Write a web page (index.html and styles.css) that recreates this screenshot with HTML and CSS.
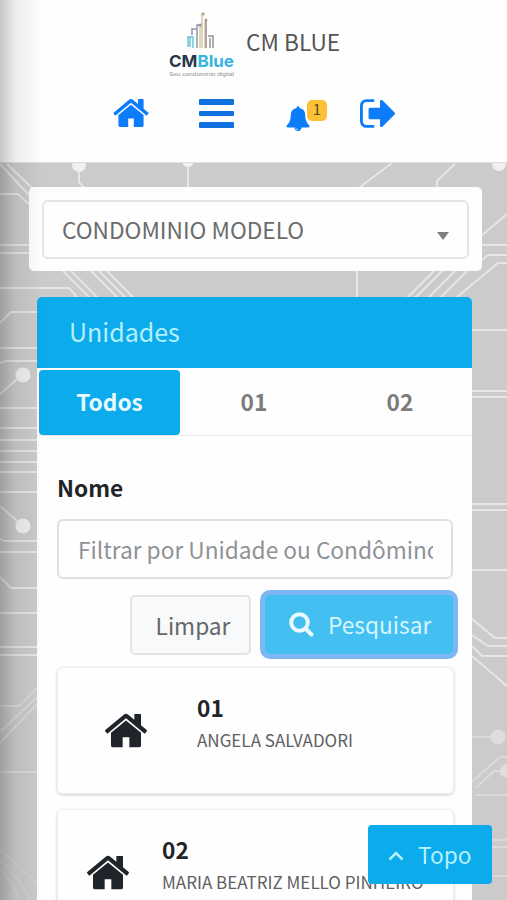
FILE: index.html
```html
<!DOCTYPE html>
<html lang="pt-br">
<head>
    <meta charset="UTF-8">
    <meta name="viewport" content="width=device-width, initial-scale=1.0">
    <title>CM Blue - Unidades</title>
    <link rel="stylesheet" href="styles.css">
</head>
<body>
    <!-- icons -->
    <svg class="sprite" width="0" height="0">
        <symbol id="home" viewBox="26 30 1612 1282"><path d="M1408 768v480q0 26-19 45t-45 19H960V928H704v384H320q-26 0-45-19t-19-45V768q0-1 .5-3t.5-3l575-474 575 474q1 2 1 6zm223-69l-62 74q-8 9-21 11h-3q-13 0-21-7L832 200 140 777q-12 8-24 7-13-2-21-11l-62-74q-8-10-7-23.500t11-21.500L756 56q32-26 76-26t76 26l244 204V65q0-14 9-23t23-9h192q14 0 23 9t9 23v408l219 182q10 8 11 21.500t-7 23.500z"/></symbol>
        <symbol id="bell" viewBox="64 0 1664 1792"><path d="M912 1696q0-16-16-16-59 0-101.500-42.500t-42.500-101.500q0-16-16-16t-16 16q0 73 51.500 124.500t124.500 51.500q16 0 16-16zm816-288q0 52-38 90t-90 38h-448q0 106-75 181t-181 75-181-75-75-181h-448q-52 0-90-38t-38-90q50-42 91-88t85-119.500 74.500-158.500 50-206 19.500-260q0-152 117-282.500t307-158.500q-8-19-8-39 0-40 28-68t68-28 68 28 28 68q0 20-8 39 190 28 307 158.500t117 282.500q0 139 19.500 260t50 206 74.500 158.500 85 119.500 91 88z"/></symbol>
        <symbol id="sign-out" viewBox="64 256 1568 1280"><path d="M704 1440q0 4 1 20t.5 26.500-3 23.500-10 19.500-20.500 6.500h-320q-119 0-203.500-84.500t-84.500-203.500v-704q0-119 84.500-203.500t203.500-84.500h320q13 0 22.500 9.500t9.500 22.500q0 4 1 20t.5 26.500-3 23.500-10 19.500-20.500 6.500h-320q-66 0-113 47t-47 113v704q0 66 47 113t113 47h312l11.500 1 11.500 3 8 5.500 7 9 2 13.500zm928-544q0 26-19 45l-544 544q-19 19-45 19t-45-19-19-45v-288h-448q-26 0-45-19t-19-45v-384q0-26 19-45t45-19h448v-288q0-26 19-45t45-19 45 19l544 544q19 19 19 45z"/></symbol>
    </svg>

    <!-- circuit board background -->
    <svg class="circuit" viewBox="0 0 507 900" width="507" height="900">
        <g class="traces">
            <path d="M0 164L30 196M7 164L32 188M0 194H18L32 207M79 168V182L84 188M188 164V190M360 187L392 163M437 187V181L455 164"/>
            <path d="M0 245H30M0 253H30M0 288H69L80 300M63 271L92 300M71 271L100 300M91 271L120 300M99 271L128 300M107 271L136 300M357 271V300"/>
            <path d="M434 271L405 300M442 271L413 300M455 271L426 300M467 271L438 300"/>
            <path d="M480 237L507 214M480 245H507M478 263L488 255H507M457 297L498 263H507"/>
            <path d="M0 323L11 312H38M0 348H38M0 363L5 361H38M0 394L23 374M0 408H38M0 428H38M0 440H38M0 451H38M0 462H38M0 472H38M0 492H38"/>
            <path d="M0 506L23 526M0 539L4 541H38M0 552H38M0 577L11 588H38M0 613H38M0 647H38M0 655H38"/>
            <path d="M472 330H507M472 391H507M472 397H507M472 504H507M472 510H507M472 570H507"/>
            <path d="M472 619L495 638H507M472 635L488 646H507M472 646L482 656H507M472 656L507 686"/>
        </g>
        <g class="traces soft">
            <path d="M0 706H19L38 687M0 732L38 696M0 743L38 703M0 772H38"/>
            <path d="M472 737H498M472 782L500 757H507M476 788L494 771H507M475 795H507M492 840H507M492 847H507M492 876H507"/>
        </g>
        <path class="faint" d="M0 850Q22 868 38 884M0 860Q18 875 30 900M0 870Q12 880 20 900"/>
        <g class="nodes">
            <circle cx="79" cy="165" r="7"/>
            <circle cx="188" cy="161" r="6"/>
            <circle cx="499" cy="164" r="7"/>
            <circle cx="23" cy="375" r="7.500"/>
            <circle cx="23" cy="526" r="7.500"/>
        </g>
        <g class="nodes soft">
            <circle cx="498" cy="737" r="7.500"/>
            <circle cx="507" cy="771" r="7"/>
        </g>
    </svg>

    <header>
        <div class="brand">
            <svg class="logo" viewBox="0 0 68 66" width="68" height="66">
                <g fill="none" stroke-width="1.500">
                    <path stroke="#6cc5d8" d="M20 36V26H25V37M22 25V36"/>
                    <path stroke="#8b97a8" d="M24 24V18H29V37M29 17V14H33"/>
                    <path stroke="#d6c8a2" d="M32 37V14H34V37M34 3V37M37 10V37"/>
                    <path stroke="#9a8f9c" d="M38 9V37M40 25H45V37M42 27V37"/>
                </g>
                <circle cx="35" cy="3" r="1.800" fill="#b9ac92"/>
                <circle cx="38" cy="9" r="1.500" fill="#a79c96"/>
                <circle cx="32" cy="14" r="1.500" fill="#8f95a0"/>
                <text class="logo-name" x="1" y="55.500" textLength="65" lengthAdjust="spacingAndGlyphs">CM<tspan>Blue</tspan></text>
                <text class="logo-sub" x="1" y="65" textLength="65" lengthAdjust="spacingAndGlyphs">Seu condomínio digital</text>
            </svg>
            <span class="brand-name">CM BLUE</span>
        </div>
        <nav>
            <a class="nav-home"><svg width="36" height="28"><use href="#home"/></svg></a>
            <a class="nav-menu"><i></i><i></i><i></i></a>
            <a class="nav-bell"><svg width="24" height="25"><use href="#bell"/></svg><span class="badge">1</span></a>
            <a class="nav-exit"><svg width="35" height="29"><use href="#sign-out"/></svg></a>
        </nav>
    </header>

    <main>
        <div class="condo">
            <div class="select"><span>CONDOMINIO MODELO</span><i class="caret"></i></div>
        </div>

        <section class="card">
            <h1><span>Unidades</span></h1>
            <div class="tabs">
                <a class="active">Todos</a>
                <a>01</a>
                <a>02</a>
            </div>
            <div class="content">
                <label for="nome">Nome</label>
                <input type="text" id="nome" placeholder="Filtrar por Unidade ou Condômino">
                <div class="actions">
                    <button class="btn btn-light">Limpar</button>
                    <button class="btn btn-search">
                        <svg width="25" height="25" viewBox="0 0 25 25"><circle cx="10.500" cy="10.500" r="8.300"/><path d="M16.500 16.500L22.500 22.500"/></svg>
                        <span>Pesquisar</span>
                    </button>
                </div>
                <div class="unit">
                    <svg width="42" height="35"><use href="#home"/></svg>
                    <div>
                        <h2>01</h2>
                        <p>ANGELA SALVADORI</p>
                    </div>
                </div>
                <div class="unit unit-wide">
                    <svg width="42" height="35"><use href="#home"/></svg>
                    <div>
                        <h2>02</h2>
                        <p>MARIA BEATRIZ MELLO PINHEIRO</p>
                    </div>
                </div>
            </div>
        </section>
    </main>

    <a class="topo">
        <svg width="16" height="10" viewBox="0 0 16 10"><path d="M1.500 8.500L8 2L14.500 8.500"/></svg>
        <span>Topo</span>
    </a>
    <div class="side-shadow"></div>
</body>
</html>
```
FILE: styles.css
```css
* {
    box-sizing: border-box;
}
body {
    margin: 0;
    height: 900px;
    overflow: hidden;
    position: relative;
    background: #cbcbcb;
    color: #212529;
    font-family: "Noto Sans CJK SC", "Noto Sans", sans-serif;
    font-size: 22.7px;
}
h1, h2, p {
    margin: 0;
}
.sprite {
    position: absolute;
}
.circuit {
    position: absolute;
    top: 0;
    left: 0;
    z-index: -1;
}
.traces {
    fill: none;
    stroke: #e6e6e6;
    stroke-width: 2;
}
.traces.soft {
    stroke: #dadada;
}
.faint {
    fill: none;
    stroke: #d3d3d3;
    stroke-width: 1.5;
}
.nodes {
    fill: #f0f0f0;
}
.nodes.soft {
    fill: #dedede;
}
header {
    height: 163px;
    background: #fefefe;
    border-bottom: 1px solid #dedede;
    padding-top: 11px;
}
.brand {
    display: flex;
    height: 66px;
    padding-left: 168px;
}
.brand-name {
    margin-left: 10px;
    line-height: 61px;
    color: #555;
}
.logo-name {
    font-family: Inter, sans-serif;
    font-size: 16.5px;
    font-weight: bold;
    fill: #26384c;
}
.logo-name tspan {
    fill: #35b5e0;
}
.logo-sub {
    font-family: "Liberation Sans", sans-serif;
    font-size: 5.5px;
    fill: #8b8f96;
}
nav {
    display: flex;
    align-items: flex-start;
    margin-top: 21px;
    padding-left: 113px;
    color: #0c7cf8;
}
nav svg {
    display: block;
    fill: currentColor;
}
.nav-home {
    padding-top: 1px;
}
.nav-menu {
    display: flex;
    flex-direction: column;
    gap: 6px;
    width: 35px;
    margin: 1px 0 0 50px;
}
.nav-menu i {
    height: 5.6px;
    border-radius: 1px;
    background: #0f70e0;
}
.nav-bell {
    display: flex;
    margin-left: 52px;
}
.nav-bell svg {
    margin-top: 8px;
}
.badge {
    width: 20px;
    height: 21px;
    margin: 2px 0 0 -3px;
    border-radius: 5px;
    background: #fdc036;
    color: #5a481c;
    font-size: 15px;
    line-height: 18px;
    text-align: center;
}
.nav-exit {
    margin: 1px 0 0 33px;
}
.condo {
    margin: 24px 25px 0 29px;
    height: 84px;
    padding: 13px;
    border-radius: 5px;
    background: #fefefe;
}
.select {
    display: flex;
    align-items: center;
    justify-content: space-between;
    height: 59px;
    padding: 0 18px 1px;
    border: 2px solid #e4e4e4;
    border-radius: 6px;
    color: #6b6b6b;
}
.caret {
    border: 6px solid transparent;
    border-top: 8px solid #808080;
    border-bottom: 0;
    margin-top: 13px;
}
.card {
    margin: 26px 35px 0 37px;
    height: 640px;
    border-radius: 6px 6px 0 0;
    background: #fefefe;
}
.card h1 {
    height: 71px;
    padding-left: 32px;
    border-radius: 5px 5px 0 0;
    background: #0babec;
    color: #b5f0ff;
    font-size: 25px;
    font-weight: normal;
    line-height: 68px;
}
.tabs {
    display: flex;
    height: 68px;
    padding: 2px 0 0 2px;
    border-bottom: 1px solid #e4e6e8;
    color: #7b7c7e;
    font-weight: bold;
    line-height: 64px;
    text-align: center;
}
.tabs a {
    flex: 1;
    padding-left: 2px;
}
.tabs .active {
    flex: 0 0 141px;
    height: 65px;
    padding: 0;
    border-radius: 4px;
    background: #0babec;
    color: #e6faff;
}
.content {
    padding: 35px 18px 0 20px;
}
.content label {
    display: block;
    height: 48px;
    font-weight: bold;
    line-height: 34px;
}
.content input {
    display: block;
    width: 396px;
    height: 60px;
    padding: 0 18px 0 19px;
    border: 2px solid #dfe0e2;
    border-radius: 6px;
    background: #fefefe;
    font: inherit;
}
.content input::placeholder {
    color: #8f9296;
}
.actions {
    display: flex;
    justify-content: flex-end;
    gap: 14px;
    padding-right: 1px;
    margin-top: 16px;
}
.btn {
    height: 60px;
    border-radius: 5px;
    font: inherit;
}
.btn-light {
    width: 121px;
    padding: 0 0 0 5px;
    border: 2px solid #e3e4e6;
    background: #f8f9fa;
    color: #666;
}
.btn-search {
    display: flex;
    align-items: center;
    width: 188px;
    height: 59px;
    padding: 0 0 0 24px;
    border: 0;
    background: #44bff2;
    box-shadow: 0 0 0 5px #7cb6f3;
    color: #d5f6ff;
}
.btn-search svg {
    margin-right: 14px;
    fill: none;
    stroke: #eafaff;
    stroke-width: 4;
    stroke-linecap: round;
}
.unit {
    display: flex;
    height: 127px;
    width: 397px;
    margin: 12px 0 0 0;
    padding: 23px 0 0 47px;
    border: 1px solid #efefef;
    border-radius: 6px;
    box-shadow: 0 1px 3px rgba(0,0,0,0.2);
}
.unit + .unit {
    margin-top: 15px;
}
.unit svg {
    margin: 22px 50px 0 0;
    fill: #1f252b;
}
.unit h2 {
    font-size: 22.7px;
    line-height: 34px;
}
.unit p {
    color: #5e6062;
    font-size: 17px;
    line-height: 30px;
    white-space: nowrap;
}
.unit-wide {
    padding-left: 29px;
}
.unit-wide svg {
    margin-right: 33px;
}
.topo {
    position: fixed;
    left: 368px;
    top: 825px;
    display: flex;
    align-items: center;
    width: 124px;
    height: 59px;
    padding-left: 20px;
    border-radius: 4px;
    background: #0babec;
    color: #b5f0ff;
}
.topo svg {
    margin: 2px 14px 0 0;
    fill: none;
    stroke: #b5f0ff;
    stroke-width: 2.5;
}
.side-shadow {
    position: fixed;
    top: 0;
    left: 0;
    width: 42px;
    height: 900px;
    background: linear-gradient(to right, rgba(0,0,0,0.22), rgba(0,0,0,0.07) 35%, transparent);
}
```
